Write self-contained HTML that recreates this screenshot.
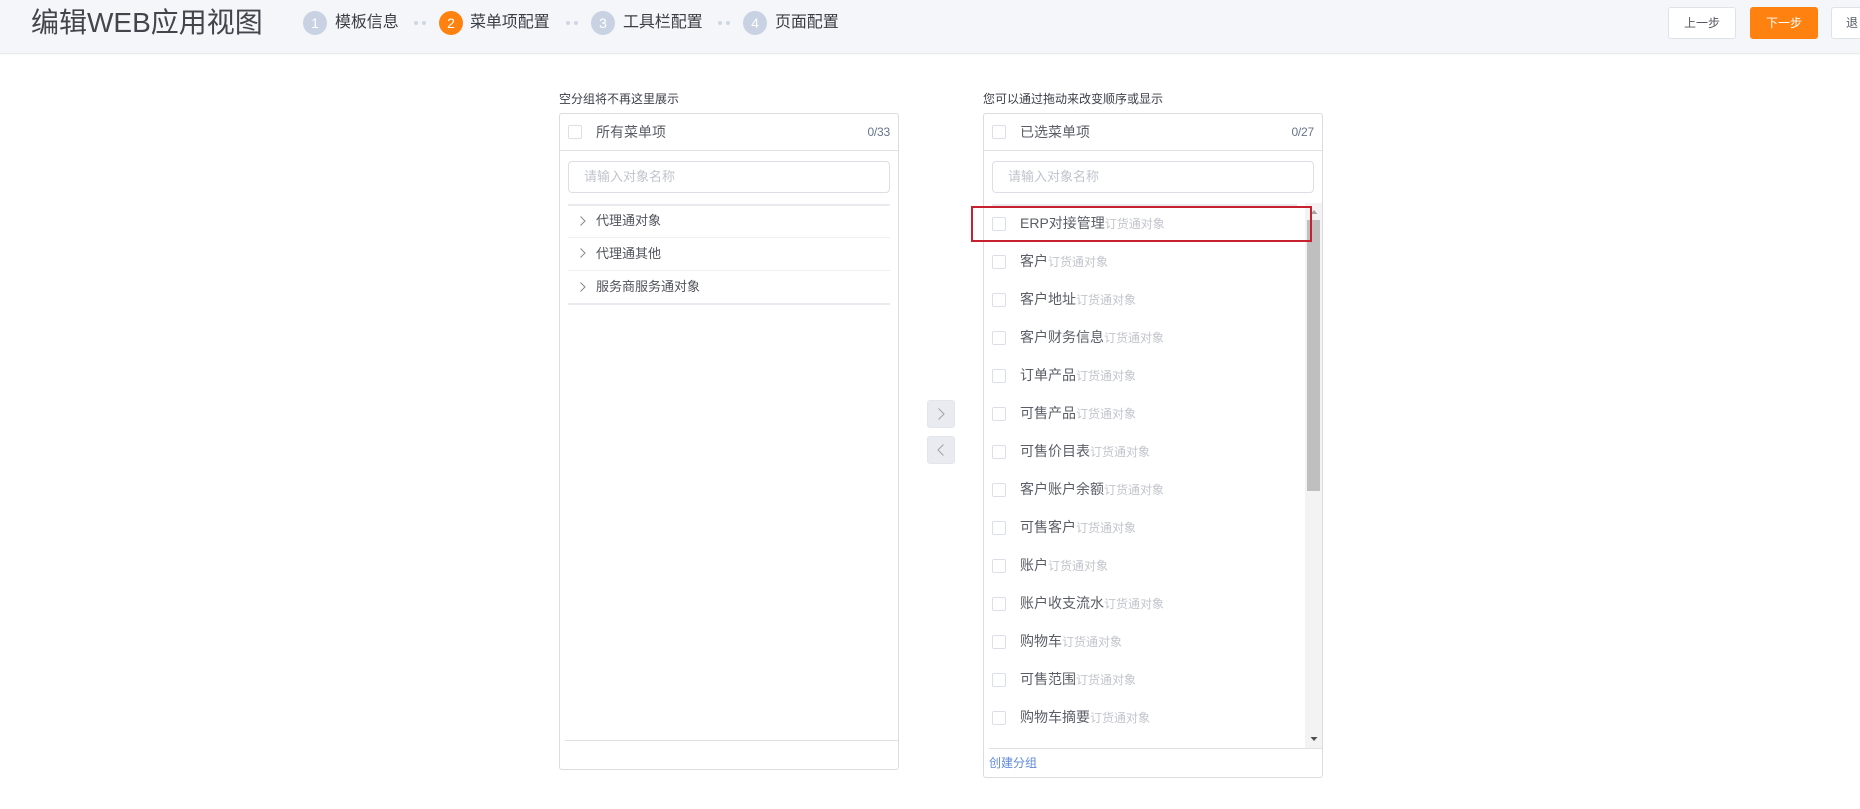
<!DOCTYPE html>
<html lang="zh">
<head>
<meta charset="utf-8">
<title>编辑WEB应用视图</title>
<style>
html,body{margin:0;padding:0;width:1860px;height:809px;overflow:hidden;background:#fff}
body{position:relative;font-family:"Liberation Sans","Noto Sans CJK SC",sans-serif;color:#545861}
.a,.a *{box-sizing:border-box}
.a{position:absolute;white-space:nowrap}
.header{left:0;top:0;width:1860px;height:54px;background:#f5f6fa;border-bottom:1px solid #e9eaee;box-shadow:0 1px 2px rgba(0,0,0,.03)}
.title{left:31px;top:3px;font-size:28px;line-height:40px;color:#42454c}
.circle{top:11px;width:24px;height:24px;border-radius:50%;background:#c9d2e3;color:#fff;font-size:14px;line-height:24px;text-align:center}
.circle.on{background:#ff8210}
.step{top:11px;font-size:16px;line-height:24px;color:#3a3d44;letter-spacing:-.1px}
.dot{top:21px;width:4px;height:4px;border-radius:50%;background:#cfd6e4}
.btn{top:7px;width:68px;height:32px;border:1px solid #dfe2e8;border-radius:3px;background:#fff;font-size:12px;line-height:30px;text-align:center;color:#545861}
.btn.pri{background:#ff8210;border-color:#ff8210;color:#fff}
.lbl{top:91px;font-size:12px;line-height:16px;color:#3d4047}
.panel{top:113px;width:340px;border:1px solid #dcdcdf;border-radius:3px;background:#fff}
.cb{width:14px;height:14px;border:1px solid #dcdfe6;border-radius:2px;background:#fff}
.ph{font-size:14px;line-height:20px;color:#5a5d65}
.count{top:124px;font-size:12px;line-height:16px;color:#68748f;text-align:right;letter-spacing:-.2px}
.hl{height:1px;background:#e1e1e4}
.input{top:161px;height:32px;border:1px solid #dcdfe6;border-radius:4px;background:#fff;font-size:13px;line-height:30px;color:#c0c4cc;padding-left:15px}
.thick{height:2px;background:#e8eaf0}
.thin{height:1px;background:#eef0f3}
.tree{left:596px;font-size:13px;line-height:20px;color:#50535b}
.row{left:1020px;font-size:14px;line-height:20px;color:#5a5d65}
.row span{font-size:12px;color:#c2c5cb}
.mid{left:927px;width:28px;height:28px;border-radius:3px;background:#e9ebf1;border:1px solid #e3e5ec}
svg{position:absolute;display:block}
</style>
</head>
<body>
<div class="a header"></div>
<div class="a title">编辑WEB应用视图</div>

<div class="a circle" style="left:303px">1</div>
<div class="a step" style="left:335px">模板信息</div>
<div class="a dot" style="left:414px"></div><div class="a dot" style="left:422px"></div>
<div class="a circle on" style="left:439px">2</div>
<div class="a step" style="left:470px">菜单项配置</div>
<div class="a dot" style="left:566px"></div><div class="a dot" style="left:574px"></div>
<div class="a circle" style="left:591px">3</div>
<div class="a step" style="left:623px">工具栏配置</div>
<div class="a dot" style="left:718px"></div><div class="a dot" style="left:726px"></div>
<div class="a circle" style="left:743px">4</div>
<div class="a step" style="left:775px">页面配置</div>

<div class="a btn" style="left:1668px">上一步</div>
<div class="a btn pri" style="left:1750px">下一步</div>
<div class="a btn" style="left:1831px;text-align:left;padding-left:14px">退</div>

<div class="a lbl" style="left:559px">空分组将不再这里展示</div>
<div class="a lbl" style="left:983px">您可以通过拖动来改变顺序或显示</div>

<!-- left panel -->
<div class="a panel" style="left:559px;height:657px"></div>
<div class="a cb" style="left:568px;top:125px"></div>
<div class="a ph" style="left:596px;top:122px">所有菜单项</div>
<div class="a count" style="left:850px;width:40px">0/33</div>
<div class="a hl" style="left:560px;top:150px;width:338px"></div>
<div class="a input" style="left:568px;width:322px">请输入对象名称</div>
<div class="a thick" style="left:568px;top:204px;width:322px"></div>
<svg style="left:578px;top:215px" width="10" height="12" viewBox="0 0 10 12"><path d="M2.5 1.5L7 6L2.5 10.5" fill="none" stroke="#85888f" stroke-width="1"/></svg>
<div class="a tree" style="top:211px">代理通对象</div>
<div class="a thin" style="left:568px;top:237px;width:322px"></div>
<svg style="left:578px;top:247px" width="10" height="12" viewBox="0 0 10 12"><path d="M2.5 1.5L7 6L2.5 10.5" fill="none" stroke="#85888f" stroke-width="1"/></svg>
<div class="a tree" style="top:244px">代理通其他</div>
<div class="a thin" style="left:568px;top:270px;width:322px"></div>
<svg style="left:578px;top:281px" width="10" height="12" viewBox="0 0 10 12"><path d="M2.5 1.5L7 6L2.5 10.5" fill="none" stroke="#85888f" stroke-width="1"/></svg>
<div class="a tree" style="top:277px">服务商服务通对象</div>
<div class="a thick" style="left:568px;top:303px;width:322px"></div>
<div class="a hl" style="left:565px;top:740px;width:333px"></div>

<!-- middle buttons -->
<div class="a mid" style="top:400px"></div>
<svg style="left:935px;top:406px" width="12" height="16" viewBox="0 0 12 16"><path d="M3.5 2.5L9 8L3.5 13.5" fill="none" stroke="#9da1ab" stroke-width="1"/></svg>
<div class="a mid" style="top:436px"></div>
<svg style="left:935px;top:442px" width="12" height="16" viewBox="0 0 12 16"><path d="M8.5 2.5L3 8L8.5 13.5" fill="none" stroke="#9da1ab" stroke-width="1"/></svg>

<!-- right panel -->
<div class="a panel" style="left:983px;height:665px"></div>
<div class="a cb" style="left:992px;top:125px"></div>
<div class="a ph" style="left:1020px;top:122px">已选菜单项</div>
<div class="a count" style="left:1274px;width:40px">0/27</div>
<div class="a hl" style="left:984px;top:150px;width:338px"></div>
<div class="a input" style="left:992px;width:322px">请输入对象名称</div>
<div class="a thick" style="left:992px;top:204px;width:305px"></div>

<div class="a cb" style="left:992px;top:217px"></div><div class="a row" style="top:213px">ERP对接管理<span>订货通对象</span></div>
<div class="a cb" style="left:992px;top:255px"></div><div class="a row" style="top:251px">客户<span>订货通对象</span></div>
<div class="a cb" style="left:992px;top:293px"></div><div class="a row" style="top:289px">客户地址<span>订货通对象</span></div>
<div class="a cb" style="left:992px;top:331px"></div><div class="a row" style="top:327px">客户财务信息<span>订货通对象</span></div>
<div class="a cb" style="left:992px;top:369px"></div><div class="a row" style="top:365px">订单产品<span>订货通对象</span></div>
<div class="a cb" style="left:992px;top:407px"></div><div class="a row" style="top:403px">可售产品<span>订货通对象</span></div>
<div class="a cb" style="left:992px;top:445px"></div><div class="a row" style="top:441px">可售价目表<span>订货通对象</span></div>
<div class="a cb" style="left:992px;top:483px"></div><div class="a row" style="top:479px">客户账户余额<span>订货通对象</span></div>
<div class="a cb" style="left:992px;top:521px"></div><div class="a row" style="top:517px">可售客户<span>订货通对象</span></div>
<div class="a cb" style="left:992px;top:559px"></div><div class="a row" style="top:555px">账户<span>订货通对象</span></div>
<div class="a cb" style="left:992px;top:597px"></div><div class="a row" style="top:593px">账户收支流水<span>订货通对象</span></div>
<div class="a cb" style="left:992px;top:635px"></div><div class="a row" style="top:631px">购物车<span>订货通对象</span></div>
<div class="a cb" style="left:992px;top:673px"></div><div class="a row" style="top:669px">可售范围<span>订货通对象</span></div>
<div class="a cb" style="left:992px;top:711px"></div><div class="a row" style="top:707px">购物车摘要<span>订货通对象</span></div>

<!-- scrollbar -->
<div class="a" style="left:1305px;top:203px;width:17px;height:545px;background:#f3f3f3"></div>
<div class="a" style="left:1307px;top:220px;width:13px;height:271px;background:#bfbfbf"></div>
<svg style="left:1309px;top:208px" width="10" height="8" viewBox="0 0 10 8"><path d="M1.5 6L5 2L8.5 6Z" fill="#a3a3a3"/></svg>
<svg style="left:1309px;top:735px" width="10" height="8" viewBox="0 0 10 8"><path d="M1.5 2L8.5 2L5 6Z" fill="#505050"/></svg>

<div class="a hl" style="left:989px;top:748px;width:333px"></div>
<div class="a" style="left:989px;top:755px;font-size:12px;line-height:16px;color:#5f8ad8">创建分组</div>

<!-- red highlight -->
<div class="a" style="left:971px;top:206px;width:341px;height:36px;border:2px solid #c9202f"></div>
</body>
</html>
